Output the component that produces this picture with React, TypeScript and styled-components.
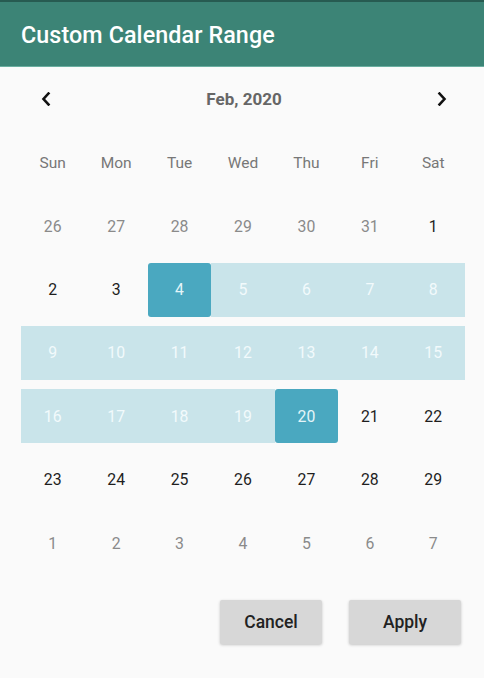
import React from "react";
import styled, { createGlobalStyle } from "styled-components";

const Global = createGlobalStyle`
  html, body { margin: 0; padding: 0; background: #fafafa; }
  body { font-family: Roboto, "Noto Sans", Arial, sans-serif; }
  #root { width: 484px; min-height: 678px; }
`;

const Page = styled.div`
  width: 484px;
  height: 678px;
  background: #fafafa;
  display: flex;
  flex-direction: column;
  overflow: hidden;
`;

const Header = styled.header`
  height: 67px;
  box-sizing: border-box;
  background: #3c8476;
  border-top: 2px solid #275b51;
  border-bottom: 1px solid #6aaea0;
  display: flex;
  align-items: center;
  padding: 2px 21px 0;
`;

const Title = styled.h1`
  margin: 0;
  color: #ffffff;
  font-size: 23.3px;
  font-weight: 500;
  letter-spacing: 0.1px;
`;

const Nav = styled.div`
  height: 64px;
  display: flex;
  align-items: center;
  justify-content: space-between;
  padding: 0 34px 0 38px;
`;

const NavButton = styled.button`
  width: 16px;
  height: 24px;
  border: none;
  background: transparent;
  padding: 0;
  display: flex;
  align-items: center;
  justify-content: center;
  color: #111;
`;

const MonthLabel = styled.div`
  color: #666;
  font-size: 17px;
  font-weight: 700;
`;

const Grid = styled.div`
  display: grid;
  grid-template-columns: repeat(7, 63.43px);
  grid-auto-rows: 63.43px;
  padding: 0 19px 0 21px;
`;

const WeekDay = styled.div`
  display: flex;
  align-items: center;
  justify-content: center;
  color: #777;
  font-size: 15.5px;
`;

type Kind = "out" | "in" | "range" | "selected";

const Cell = styled.div`
  padding: 4.7px 0;
  box-sizing: border-box;
  display: flex;
`;

const colorFor: Record<Kind, string> = {
  out: "#8a8a8a",
  in: "#1e1e1e",
  range: "#f2fafc",
  selected: "#e4f5f9",
};

const bgFor: Record<Kind, string> = {
  out: "transparent",
  in: "transparent",
  range: "#c9e4ea",
  selected: "#4aa8c0",
};

const Day = styled.div<{ $kind: Kind }>`
  flex: 1;
  display: flex;
  align-items: center;
  justify-content: center;
  font-size: 15.8px;
  color: ${(p) => colorFor[p.$kind]};
  background: ${(p) => bgFor[p.$kind]};
  border-radius: ${(p) => (p.$kind === "selected" ? "3px" : "0")};
`;

const Actions = styled.div`
  display: flex;
  justify-content: flex-end;
  gap: 27px;
  padding: 0 23px 0 0;
  margin-top: 25.5px;
`;

const ActionButton = styled.button<{ $w: number }>`
  width: ${(p) => p.$w}px;
  height: 44px;
  border: none;
  border-radius: 2px;
  background: #d7d7d7;
  box-shadow: 0 1px 3px rgba(0, 0, 0, 0.22);
  color: #222;
  font-family: Roboto, Arial, sans-serif;
  font-size: 17.5px;
  font-weight: 500;
  padding: 0;
`;

const Chevron = ({ dir }: { dir: "left" | "right" }) => (
  <svg width="10" height="14" viewBox="0 0 10 14">
    <path
      d={dir === "left" ? "M7.5 1.5 L2.5 7 L7.5 12.5" : "M2.5 1.5 L7.5 7 L2.5 12.5"}
      fill="none"
      stroke="#111"
      strokeWidth="2.6"
      strokeLinecap="square"
    />
  </svg>
);

const weekdays = ["Sun", "Mon", "Tue", "Wed", "Thu", "Fri", "Sat"];

type D = { n: number; k: Kind };
const days: D[] = [
  ...[26, 27, 28, 29, 30, 31].map((n) => ({ n, k: "out" as Kind })),
  ...Array.from({ length: 29 }, (_, i) => {
    const n = i + 1;
    let k: Kind = "in";
    if (n === 4 || n === 20) k = "selected";
    else if (n > 4 && n < 20) k = "range";
    return { n, k };
  }),
  ...[1, 2, 3, 4, 5, 6, 7].map((n) => ({ n, k: "out" as Kind })),
];

export default function App() {
  return (
    <Page>
      <Global />
      <Header>
        <Title>Custom Calendar Range</Title>
      </Header>
      <Nav>
        <NavButton aria-label="Previous month">
          <Chevron dir="left" />
        </NavButton>
        <MonthLabel>Feb, 2020</MonthLabel>
        <NavButton aria-label="Next month">
          <Chevron dir="right" />
        </NavButton>
      </Nav>
      <Grid>
        {weekdays.map((w) => (
          <WeekDay key={w}>{w}</WeekDay>
        ))}
        {days.map((d, i) => (
          <Cell key={i}>
            <Day $kind={d.k}>{d.n}</Day>
          </Cell>
        ))}
      </Grid>
      <Actions>
        <ActionButton $w={102}>Cancel</ActionButton>
        <ActionButton $w={112}>Apply</ActionButton>
      </Actions>
    </Page>
  );
}
